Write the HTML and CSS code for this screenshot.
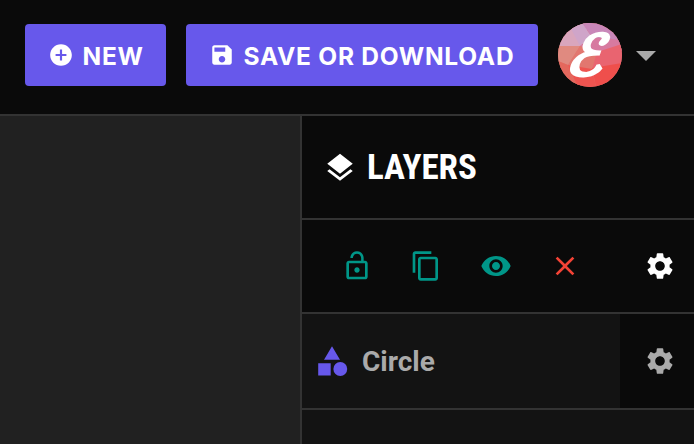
FILE: index.html
```html
<!DOCTYPE html>
<html lang="en">
<head>
<meta charset="utf-8">
<title>Editor</title>
<link rel="stylesheet" href="styles.css">
</head>
<body>
<div class="app">
  <header class="topbar">
    <button class="btn btn-new">
      <svg class="btn-icon" viewBox="0 0 24 24"><path d="M12 2C6.48 2 2 6.48 2 12s4.48 10 10 10 10-4.48 10-10S17.52 2 12 2zm5 11h-4v4h-2v-4H7v-2h4V7h2v4h4v2z"/></svg>
      <span>NEW</span>
    </button>
    <button class="btn btn-save">
      <svg class="btn-icon" viewBox="0 0 24 24"><path d="M17 3H5c-1.11 0-2 .9-2 2v14c0 1.1.89 2 2 2h14c1.1 0 2-.9 2-2V7l-4-4zm-5 16c-1.66 0-3-1.34-3-3s1.34-3 3-3 3 1.34 3 3-1.34 3-3 3zm3-10H5V5h10v4z"/></svg>
      <span>SAVE OR DOWNLOAD</span>
    </button>
    <div class="avatar">
      <svg class="facets" viewBox="0 0 64 64">
        <path fill="#d9a6bd" d="M0 0h32l-10 23H0z"/>
        <path fill="#cfa5c9" d="M10 0h14l10 14-12 9z"/>
        <path fill="#c987b9" d="M24 0h40v20L34 14z"/>
        <path fill="#d77aa0" d="M34 14l30 3v11l-25 5-17-10z"/>
        <path fill="#e08a80" d="M0 23h22L10 42 0 38z"/>
        <path fill="#e2776f" d="M22 23l17 6-5 18-24-5z"/>
        <path fill="#e96470" d="M39 29l25-8v20l-30 6z"/>
        <path fill="#e4685d" d="M0 38l10 4 14 22H0z"/>
        <path fill="#ee5450" d="M10 42l24 4 4 18H20z"/>
        <path fill="#ef4f4c" d="M34 45l30-5v24H38z"/>
      </svg>
      <span class="monogram">ℰ</span>
    </div>
    <svg class="caret" viewBox="0 0 20 10"><path d="M0 0h20L10 10z"/></svg>
  </header>
  <main class="workspace">
    <section class="canvas"></section>
    <aside class="panel">
      <div class="panel-title">
        <svg class="layers-icon" viewBox="0 0 24 24"><path d="M11.99 18.54l-7.37-5.73L3 14.07l9 7 9-7-1.63-1.27-7.38 5.74zM12 16l7.36-5.73L21 9l-9-7-9 7 1.63 1.27L12 16z"/></svg>
        <h2>LAYERS</h2>
      </div>
      <div class="tools">
        <svg class="tool" viewBox="0 0 24 24"><path d="M12 17c1.1 0 2-.9 2-2s-.9-2-2-2-2 .9-2 2 .9 2 2 2zm6-9h-1V6c0-2.76-2.24-5-5-5S7 3.24 7 6h1.9c0-1.71 1.39-3.1 3.1-3.1 1.71 0 3.1 1.39 3.1 3.1v2H6c-1.1 0-2 .9-2 2v10c0 1.1.9 2 2 2h12c1.1 0 2-.9 2-2V10c0-1.1-.9-2-2-2zm0 12H6V10h12v10z"/></svg>
        <svg class="tool" viewBox="0 0 24 24"><path d="M16 1H4c-1.1 0-2 .9-2 2v14h2V3h12V1zm3 4H8c-1.1 0-2 .9-2 2v14c0 1.1.9 2 2 2h11c1.1 0 2-.9 2-2V7c0-1.1-.9-2-2-2zm0 16H8V7h11v14z"/></svg>
        <svg class="tool" viewBox="0 0 24 24"><path d="M12 4.5C7 4.5 2.73 7.61 1 12c1.73 4.39 6 7.5 11 7.5s9.27-3.11 11-7.5c-1.73-4.39-6-7.5-11-7.5zM12 17c-2.76 0-5-2.24-5-5s2.24-5 5-5 5 2.24 5 5-2.24 5-5 5zm0-8c-1.66 0-3 1.34-3 3s1.34 3 3 3 3-1.34 3-3-1.34-3-3-3z"/></svg>
        <svg class="tool danger" viewBox="0 0 24 24"><path d="M19 6.41L17.59 5 12 10.59 6.41 5 5 6.41 10.59 12 5 17.59 6.41 19 12 13.41 17.59 19 19 17.59 13.41 12z"/></svg>
        <svg class="tool gear" viewBox="0 0 24 24"><use href="#gear-shape"/></svg>
      </div>
      <div class="layer">
        <div class="layer-main">
          <svg class="shapes" viewBox="0 0 30 30"><path d="M14 .2l8 13.6H6zM.2 17.2h12.5v12.4H.2z"/><circle cx="22.3" cy="23" r="6.9"/></svg>
          <span class="layer-name">Circle</span>
        </div>
        <div class="layer-settings">
          <svg class="tool muted" viewBox="0 0 24 24"><path id="gear-shape" d="M19.14 12.94c.04-.3.06-.61.06-.94 0-.32-.02-.64-.07-.94l2.03-1.58c.18-.14.23-.41.12-.61l-1.92-3.32c-.12-.22-.37-.29-.59-.22l-2.39.96c-.5-.38-1.03-.7-1.62-.94l-.36-2.54c-.04-.24-.24-.41-.48-.41h-3.84c-.24 0-.43.17-.47.41l-.36 2.54c-.59.24-1.13.57-1.62.94l-2.39-.96c-.22-.08-.47 0-.59.22L2.74 8.87c-.12.21-.08.47.12.61l2.03 1.58c-.05.3-.09.63-.09.94s.02.64.07.94l-2.03 1.58c-.18.14-.23.41-.12.61l1.92 3.32c.12.22.37.29.59.22l2.39-.96c.5.38 1.03.7 1.62.94l.36 2.54c.05.24.24.41.48.41h3.84c.24 0 .44-.17.47-.41l.36-2.54c.59-.24 1.13-.56 1.62-.94l2.39.96c.22.08.47 0 .59-.22l1.92-3.32c.12-.22.07-.47-.12-.61l-2.01-1.58zM12 15.6c-1.98 0-3.6-1.62-3.6-3.6s1.62-3.6 3.6-3.6 3.6 1.62 3.6 3.6-1.62 3.6-3.6 3.6z"/></svg>
        </div>
      </div>
    </aside>
  </main>
</div>
</body>
</html>
```
FILE: styles.css
```css
* { box-sizing: border-box; }
body { margin: 0; background: #0a0a0a; overflow: hidden; }
svg { display: block; flex: none; fill: currentColor; }

.app { display: flex; flex-direction: column; height: 444px; }

.topbar {
  display: flex;
  align-items: center;
  height: 116px;
  padding: 0 0 4px 25px;
  border-bottom: 2px solid #333;
  background: #0a0a0a;
}
.btn {
  display: flex;
  align-items: center;
  height: 62px;
  padding: 0 0 0 23px;
  border: 0;
  border-radius: 4px;
  background: #6758eb;
  color: #fff;
  font: 650 24.5px/60px Inter, "Liberation Sans", sans-serif;
  letter-spacing: 0.75px;
  white-space: nowrap;
}
.btn span { padding-top: 2px; }
.btn-icon { width: 26px; height: 26px; margin-right: 8.5px; }
.btn-new { width: 141px; }
.btn-save { width: 352px; margin-left: 20px; }

.avatar {
  position: relative;
  width: 64px;
  height: 64px;
  margin-left: 20px;
  border-radius: 50%;
  background: #e2776f;
  overflow: hidden;
}
.facets { width: 64px; height: 64px; }
.monogram {
  position: absolute;
  inset: 0;
  color: #fff;
  font: 56px/64px "DejaVu Sans", sans-serif;
  text-align: center;
  -webkit-text-stroke: 3.5px #fff;
  transform: translate(-1px, 1px) scaleX(1.06) skewX(-18deg);
}
.caret { width: 20px; height: 10px; margin: 2px 0 0 14px; color: #aaa; }

.workspace { display: flex; flex: 1; }
.canvas { width: 300px; background: #212121; }
.panel { width: 394px; border-left: 2px solid #333; background: #131313; }

.panel-title {
  display: flex;
  align-items: center;
  height: 104px;
  padding: 1px 0 0 20.5px;
  border-bottom: 2px solid #333;
  background: #0a0a0a;
  color: #fff;
}
.layers-icon { width: 34px; height: 34px; }
.panel-title h2 {
  margin: 0 0 0 10.5px;
  font: 700 35px/42px Roboto, sans-serif;
  font-stretch: 75%;
}

.tools {
  display: flex;
  align-items: center;
  gap: 37.5px;
  height: 94px;
  padding: 0 18px 0 38.7px;
  border-bottom: 2px solid #333;
  background: #0a0a0a;
  color: #009688;
}
.tool { width: 32px; height: 32px; }
.danger { color: #f44336; }
.gear { margin-left: auto; color: #fff; }
.muted { color: #aaa; }

.layer { display: flex; height: 96px; border-bottom: 2px solid #333; }
.layer-main { display: flex; align-items: center; flex: 1; padding-left: 16px; }
.shapes { width: 30px; height: 30px; color: #6758eb; }
.layer-name {
  margin: 2px 0 0 14px;
  color: #aaa;
  font: 700 28px/32px Roboto, sans-serif;
}
.layer-settings {
  display: flex;
  align-items: center;
  width: 74px;
  padding-left: 24px;
  background: #0a0a0a;
}
```
